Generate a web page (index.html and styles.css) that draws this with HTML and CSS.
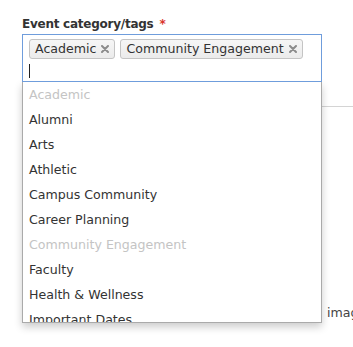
FILE: index.html
```html
<!DOCTYPE html>
<html lang="en">
<head>
<meta charset="utf-8">
<link rel="stylesheet" href="styles.css">
</head>
<body>
<div class="page">
  <div class="field">
    <label class="field-label">Event category/tags <span class="req">*</span></label>
    <div class="select">
      <div class="tags">
        <span class="tag">Academic <svg class="tag-x" viewBox="0 0 8 8" width="8" height="8"><path d="M1 1L7 7M7 1L1 7"/></svg></span>
        <span class="tag">Community Engagement <svg class="tag-x" viewBox="0 0 8 8" width="8" height="8"><path d="M1 1L7 7M7 1L1 7"/></svg></span>
      </div>
      <div class="search"><span class="caret"></span></div>
    </div>
    <ul class="dropdown">
      <li class="opt group">Academic</li>
      <li class="opt">Alumni</li>
      <li class="opt">Arts</li>
      <li class="opt">Athletic</li>
      <li class="opt">Campus Community</li>
      <li class="opt">Career Planning</li>
      <li class="opt group">Community Engagement</li>
      <li class="opt">Faculty</li>
      <li class="opt">Health &amp; Wellness</li>
      <li class="opt">Important Dates</li>
    </ul>
  </div>
  <div class="section">
    <div class="caption"><span class="pre">Upload a featured</span><span>image</span></div>
  </div>
</div>
</body>
</html>
```
FILE: styles.css
```css
html, body {
  margin: 0;
  padding: 0;
  background: #fff;
}
body {
  font-family: "DejaVu Sans", Verdana, sans-serif;
  font-size: 12.6px;
  color: #333;
  overflow: hidden;
}
.page {
  padding: 17px 0 0 22px;
  width: 331px;
  height: 330px;
}
.field {
  position: relative;
  width: 300px;
}
.field-label {
  display: block;
  font-weight: bold;
  font-size: 12px;
  letter-spacing: -0.25px;
  line-height: 15px;
  color: #333;
  margin-bottom: 2px;
}
.req {
  color: #d9342b;
  margin-left: 2px;
}
.select {
  box-sizing: border-box;
  width: 300px;
  height: 48px;
  border: 1px solid #6f9ddc;
  background: #fff;
  padding: 4px 6px 0;
  position: relative;
  z-index: 3;
}
.tags {
  display: flex;
  gap: 5px;
}
.tag {
  box-sizing: border-box;
  height: 20px;
  line-height: 18px;
  padding: 0 5px;
  border: 1px solid #c4c4c4;
  border-radius: 3px;
  background: linear-gradient(#f6f6f6, #ebebeb);
  color: #333;
  white-space: nowrap;
  display: flex;
  align-items: center;
  gap: 5px;
}
.tag-x {
  display: block;
  fill: none;
  stroke: #8c8c8c;
  stroke-width: 2;
  stroke-linecap: round;
}
.search {
  height: 24px;
  display: flex;
  align-items: center;
}
.caret {
  display: block;
  width: 1px;
  height: 14px;
  background: #222;
}
.dropdown {
  position: absolute;
  left: 0;
  top: 65px;
  box-sizing: border-box;
  width: 300px;
  height: 241px;
  margin: 0;
  padding: 0;
  list-style: none;
  background: #fff;
  border: 1px solid #aaa;
  border-top: none;
  box-shadow: 0 4px 8px rgba(0, 0, 0, 0.2);
  overflow: hidden;
  z-index: 2;
}
.opt {
  height: 25px;
  line-height: 25px;
  padding-left: 6px;
  color: #333;
  white-space: nowrap;
}
.opt.group {
  color: #c4c4c4;
}
.section {
  margin-left: -22px;
  margin-top: 24px;
  padding-left: 320px;
}
.section::before {
  content: "";
  display: block;
  border-top: 1px solid #d4d4d4;
}
.caption {
  margin-left: -320px;
  margin-top: 198px;
  display: flex;
  gap: 5px;
  white-space: nowrap;
  color: #444;
}
.pre {
  display: block;
  width: 322px;
  text-align: right;
  flex-shrink: 0;
}
```
